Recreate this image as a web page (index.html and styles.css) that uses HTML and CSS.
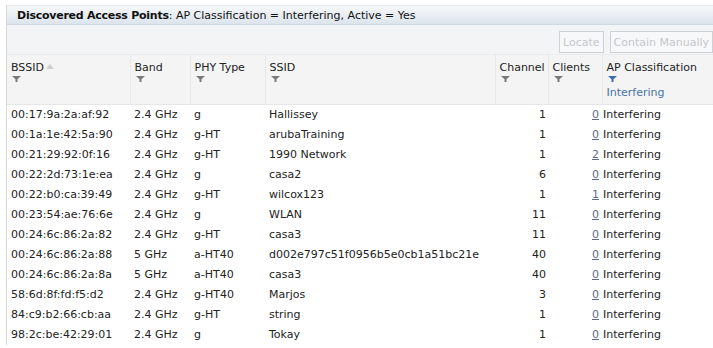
FILE: index.html
```html
<!DOCTYPE html>
<html>
<head>
<meta charset="utf-8">
<link rel="stylesheet" href="styles.css">
</head>
<body>
<div class="panel">
  <div class="title"><b>Discovered Access Points</b>: AP Classification = Interfering, Active = Yes</div>
  <div class="toolbar">
    <button class="btn" disabled>Locate</button>
    <button class="btn" disabled>Contain Manually</button>
  </div>
  <table class="grid">
    <colgroup>
      <col class="c1"><col class="c2"><col class="c3"><col class="c4"><col class="c5"><col class="c6"><col class="c7">
    </colgroup>
    <thead>
      <tr>
        <th><span class="lbl">BSSID<svg class="sort" width="8" height="5" viewBox="0 0 8 5"><polygon points="0,5 8,5 4,0" fill="#cfcfcf"/></svg></span><svg class="filt" width="9" height="6" viewBox="0 0 9 6"><polygon points="0,0 9,0 5.5,3.2 5.5,6 3.5,6 3.5,3.2" fill="#7a7a7a"/></svg></th>
        <th><span class="lbl">Band</span><svg class="filt" width="9" height="6" viewBox="0 0 9 6"><polygon points="0,0 9,0 5.5,3.2 5.5,6 3.5,6 3.5,3.2" fill="#7a7a7a"/></svg></th>
        <th><span class="lbl">PHY Type</span><svg class="filt" width="9" height="6" viewBox="0 0 9 6"><polygon points="0,0 9,0 5.5,3.2 5.5,6 3.5,6 3.5,3.2" fill="#7a7a7a"/></svg></th>
        <th><span class="lbl">SSID</span><svg class="filt" width="9" height="6" viewBox="0 0 9 6"><polygon points="0,0 9,0 5.5,3.2 5.5,6 3.5,6 3.5,3.2" fill="#7a7a7a"/></svg></th>
        <th><span class="lbl">Channel</span><svg class="filt" width="9" height="6" viewBox="0 0 9 6"><polygon points="0,0 9,0 5.5,3.2 5.5,6 3.5,6 3.5,3.2" fill="#7a7a7a"/></svg></th>
        <th><span class="lbl">Clients</span><svg class="filt" width="9" height="6" viewBox="0 0 9 6"><polygon points="0,0 9,0 5.5,3.2 5.5,6 3.5,6 3.5,3.2" fill="#7a7a7a"/></svg></th>
        <th><span class="lbl">AP Classification</span><svg class="filt" width="9" height="6" viewBox="0 0 9 6"><polygon points="0,0 9,0 5.5,3.2 5.5,6 3.5,6 3.5,3.2" fill="#3a6ea8"/></svg><span class="fval">Interfering</span></th>
      </tr>
    </thead>
    <tbody>
      <tr><td>00:17:9a:2a:af:92</td><td>2.4 GHz</td><td>g</td><td>Hallissey</td><td class="num">1</td><td class="cl"><a href="#">0</a></td><td class="cls">Interfering</td></tr>
      <tr><td>00:1a:1e:42:5a:90</td><td>2.4 GHz</td><td>g-HT</td><td>arubaTraining</td><td class="num">1</td><td class="cl"><a href="#">0</a></td><td class="cls">Interfering</td></tr>
      <tr><td>00:21:29:92:0f:16</td><td>2.4 GHz</td><td>g-HT</td><td>1990 Network</td><td class="num">1</td><td class="cl"><a href="#">2</a></td><td class="cls">Interfering</td></tr>
      <tr><td>00:22:2d:73:1e:ea</td><td>2.4 GHz</td><td>g</td><td>casa2</td><td class="num">6</td><td class="cl"><a href="#">0</a></td><td class="cls">Interfering</td></tr>
      <tr><td>00:22:b0:ca:39:49</td><td>2.4 GHz</td><td>g-HT</td><td>wilcox123</td><td class="num">1</td><td class="cl"><a href="#">1</a></td><td class="cls">Interfering</td></tr>
      <tr><td>00:23:54:ae:76:6e</td><td>2.4 GHz</td><td>g</td><td>WLAN</td><td class="num">11</td><td class="cl"><a href="#">0</a></td><td class="cls">Interfering</td></tr>
      <tr><td>00:24:6c:86:2a:82</td><td>2.4 GHz</td><td>g-HT</td><td>casa3</td><td class="num">11</td><td class="cl"><a href="#">0</a></td><td class="cls">Interfering</td></tr>
      <tr><td>00:24:6c:86:2a:88</td><td>5 GHz</td><td>a-HT40</td><td>d002e797c51f0956b5e0cb1a51bc21e</td><td class="num">40</td><td class="cl"><a href="#">0</a></td><td class="cls">Interfering</td></tr>
      <tr><td>00:24:6c:86:2a:8a</td><td>5 GHz</td><td>a-HT40</td><td>casa3</td><td class="num">40</td><td class="cl"><a href="#">0</a></td><td class="cls">Interfering</td></tr>
      <tr><td>58:6d:8f:fd:f5:d2</td><td>2.4 GHz</td><td>g-HT40</td><td>Marjos</td><td class="num">3</td><td class="cl"><a href="#">0</a></td><td class="cls">Interfering</td></tr>
      <tr><td>84:c9:b2:66:cb:aa</td><td>2.4 GHz</td><td>g-HT</td><td>string</td><td class="num">1</td><td class="cl"><a href="#">0</a></td><td class="cls">Interfering</td></tr>
      <tr><td>98:2c:be:42:29:01</td><td>2.4 GHz</td><td>g</td><td>Tokay</td><td class="num">1</td><td class="cl"><a href="#">0</a></td><td class="cls">Interfering</td></tr>
    </tbody>
  </table>
</div>
</body>
</html>
```

FILE: styles.css
```css
html, body {
  margin: 0;
  padding: 0;
  background: #ffffff;
}
body {
  font-family: "DejaVu Sans", Verdana, sans-serif;
  font-size: 11px;
  color: #222;
  overflow: hidden;
}
.panel {
  margin: 5px 0 0 6px;
  border-left: 1px solid #d6d6d6;
  width: 720px;
}
.title {
  height: 20px;
  line-height: 20px;
  padding-left: 10px;
  font-size: 11px;
  color: #111;
  background: linear-gradient(#f6f8fa, #dce4ec);
  border-top: 1px solid #e6ebf0;
  border-bottom: 1px solid #d0d9e2;
  box-sizing: border-box;
  white-space: nowrap;
}
.title b {
  font-weight: bold;
  letter-spacing: -0.25px;
}
.toolbar {
  height: 30px;
  background: #f3f4f5;
  display: flex;
  align-items: flex-start;
  padding-top: 6px;
  padding-left: 552px;
  gap: 6px;
  box-sizing: border-box;
  border-bottom: 1px solid #ebebeb;
}
.btn {
  font-family: "DejaVu Sans", Verdana, sans-serif;
  font-size: 11px;
  color: #c4c8cc;
  background: #f7f8f9;
  border: 1px solid #cfd2d5;
  height: 22px;
  padding: 0 3px;
  margin: 0;
  white-space: nowrap;
}
.grid {
  border-collapse: collapse;
  table-layout: fixed;
  width: 720px;
}
.c1 { width: 123px; }
.c2 { width: 60px; }
.c3 { width: 75px; }
.c4 { width: 230px; }
.c5 { width: 53px; }
.c6 { width: 54px; }
.c7 { width: 125px; }
.grid th {
  height: 49px;
  box-sizing: border-box;
  background: #f4f4f4;
  border-left: 1px solid #fafafa;
  border-right: 1px solid #e8e8e8;
  border-bottom: 1px solid #e6e6e6;
  text-align: left;
  vertical-align: top;
  font-weight: normal;
  padding: 6px 0 0 4px;
  white-space: nowrap;
  color: #222;
}
.grid th:first-child {
  border-left: none;
}
.lbl {
  display: block;
  line-height: 13px;
}
.sort {
  margin-left: 2px;
  vertical-align: 2px;
}
.filt {
  display: block;
  margin: 2px 0 0 1px;
}
.fval {
  display: block;
  color: #4a73a6;
  margin-top: 4px;
  line-height: 13px;
}
.grid td {
  height: 20px;
  padding: 0 0 0 4px;
  white-space: nowrap;
  overflow: hidden;
  line-height: 20px;
}
.grid td.num {
  text-align: right;
  padding: 0 2px 0 0;
}
.grid td.cl {
  text-align: right;
  padding: 0 3px 0 0;
}
.grid td.cl a {
  color: #5b6d8f;
  text-decoration: underline;
}
.grid td.cls {
  padding-left: 1px;
}
```
